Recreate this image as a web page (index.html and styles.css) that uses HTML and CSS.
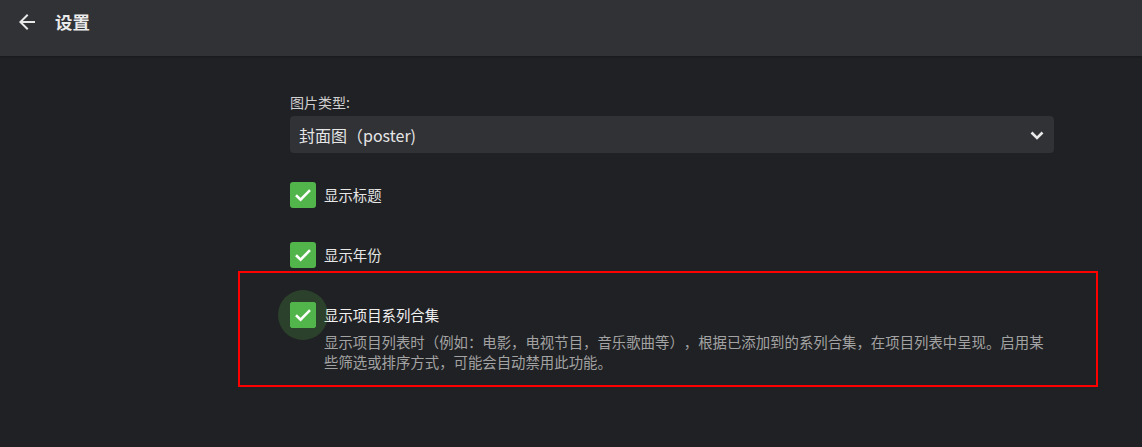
FILE: index.html
```html
<!DOCTYPE html>
<html lang="zh-CN">
<head>
<meta charset="utf-8">
<title>设置</title>
<link rel="stylesheet" href="styles.css">
</head>
<body>
<header class="topbar">
  <button class="back" aria-label="返回">
    <svg width="24" height="24" viewBox="0 0 24 24"><path d="M20 11H7.83l5.59-5.59L12 4l-8 8 8 8 1.41-1.41L7.83 13H20v-2z" fill="#e8e8e8"/></svg>
  </button>
  <h1 class="title">设置</h1>
</header>
<main class="content">
  <div class="form">
    <label class="field-label">图片类型:</label>
    <div class="select">
      <span class="select-value">封面图（poster)</span>
      <svg class="chevron" width="14" height="9" viewBox="0 0 14 9"><path d="M1.5 1.5 7 7l5.5-5.5" fill="none" stroke="#e8e8e8" stroke-width="2.6"/></svg>
    </div>
    <div class="checks">
      <div class="check-row">
        <span class="box"><svg width="18" height="14" viewBox="0 0 18 14"><path d="M2 7.2l4.6 4.4L16 2.2" fill="none" stroke="#fff" stroke-width="2.6"/></svg></span>
        <span class="check-label">显示标题</span>
      </div>
      <div class="check-row">
        <span class="box"><svg width="18" height="14" viewBox="0 0 18 14"><path d="M2 7.2l4.6 4.4L16 2.2" fill="none" stroke="#fff" stroke-width="2.6"/></svg></span>
        <span class="check-label">显示年份</span>
      </div>
      <div class="check-row">
        <span class="box focused"><svg width="18" height="14" viewBox="0 0 18 14"><path d="M2 7.2l4.6 4.4L16 2.2" fill="none" stroke="#fff" stroke-width="2.6"/></svg></span>
        <div class="check-text">
          <span class="check-label strong">显示项目系列合集</span>
          <p class="desc">显示项目列表时（例如：电影，电视节目，音乐歌曲等），根据已添加到的系列合集，在项目列表中呈现。启用某些筛选或排序方式，可能会自动禁用此功能。</p>
        </div>
      </div>
    </div>
  </div>
  <div class="highlight"></div>
</main>
</body>
</html>
```

FILE: styles.css
```css
* { box-sizing: border-box; }
html, body {
  margin: 0;
  padding: 0;
  background: #202124;
  height: 100%;
}
body {
  font-family: "Noto Sans CJK SC", "Noto Sans", sans-serif;
  color: #e6e6e6;
  text-spacing-trim: space-all;
  overflow: hidden;
}
.topbar {
  height: 56px;
  background: #313236;
  display: flex;
  align-items: center;
  padding-left: 15px;
  box-shadow: 0 1px 2px rgba(0,0,0,0.25);
}
.back {
  background: none;
  border: 0;
  padding: 0;
  width: 24px;
  height: 24px;
  display: flex;
  cursor: pointer;
  margin-top: -12px;
}
.title {
  margin: -12px 0 0 16px;
  font-size: 17.4px;
  font-weight: 700;
  color: #eaeaea;
  line-height: 24px;
}
.content {
  position: relative;
  padding: 36px 0 0 290px;
}
.form {
  width: 764px;
}
.field-label {
  display: block;
  font-size: 14px;
  line-height: 20px;
  color: #d0d0d0;
  margin-bottom: 4px;
}
.select {
  height: 37px;
  background: #313236;
  border-radius: 4px;
  display: flex;
  align-items: center;
  justify-content: space-between;
  padding: 0 10px 0 9px;
}
.select-value {
  font-size: 16px;
  color: #e6e6e6;
  line-height: 20px;
}
.chevron { margin-top: 1px; }
.checks {
  margin-top: 29px;
  display: flex;
  flex-direction: column;
  gap: 34px;
}
.check-row {
  display: flex;
  align-items: flex-start;
  gap: 8px;
}
.box {
  position: relative;
  flex: none;
  width: 26px;
  height: 26px;
  border-radius: 3px;
  background: #52b54b;
  display: flex;
  align-items: center;
  justify-content: center;
}
.box svg { position: relative; z-index: 1; }
.box.focused::before {
  content: "";
  position: absolute;
  left: -12px;
  top: -12px;
  width: 50px;
  height: 50px;
  border-radius: 50%;
  background: rgba(82,181,75,0.22);
  z-index: -0;
}
.box.focused { z-index: 0; }
.box.focused::after {
  content: "";
  position: absolute;
  inset: 0;
  border-radius: 3px;
  background: #52b54b;
}
.check-label {
  font-size: 14.4px;
  line-height: 26px;
  color: #e6e6e6;
}
.check-label.strong { color: #f0f0f0; }
.check-text {
  display: flex;
  flex-direction: column;
  width: 730px;
}
.desc {
  margin: 4px 0 0;
  font-size: 14.4px;
  line-height: 20px;
  color: #a3a3a3;
}
.highlight {
  position: absolute;
  left: 238px;
  top: 215px;
  width: 860px;
  height: 116px;
  border: 2px solid #f00;
  pointer-events: none;
}
```
